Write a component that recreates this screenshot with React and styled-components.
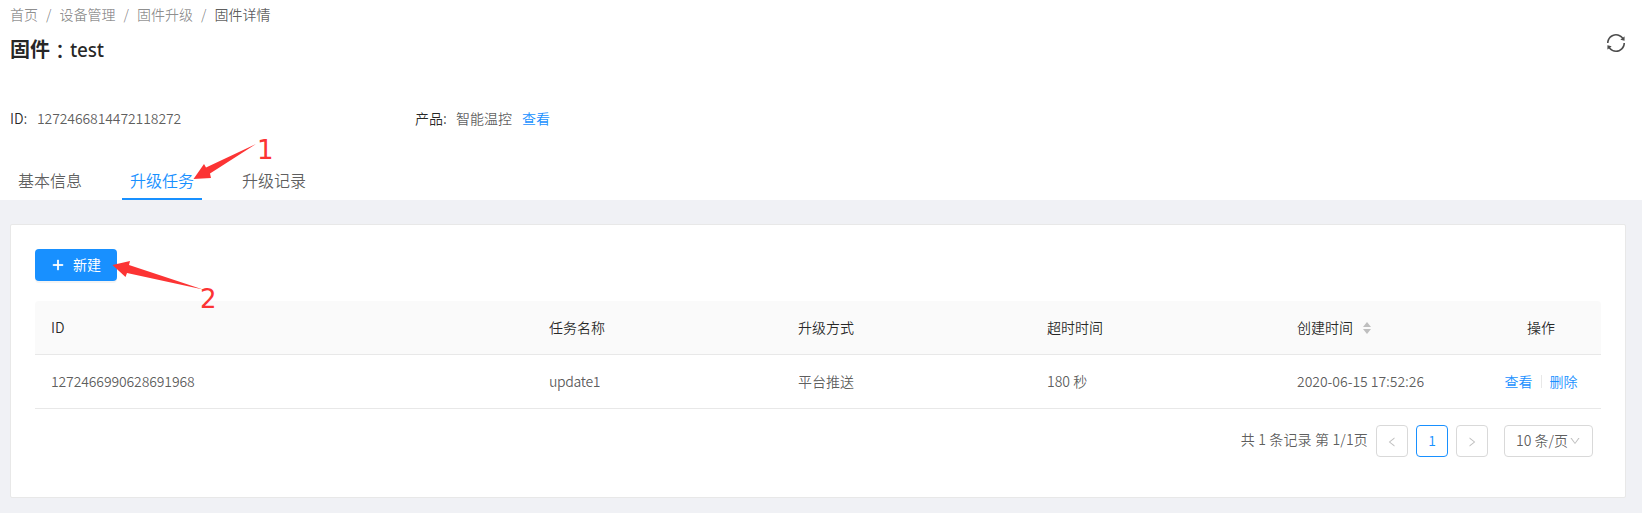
import React from "react";
import styled, { createGlobalStyle } from "styled-components";
import {
  AiOutlineSync,
  AiOutlinePlus,
  AiOutlineLeft,
  AiOutlineRight,
  AiOutlineDown,
} from "react-icons/ai";

const BLUE = "#1890ff";
const RED = "#fc3434";

const GlobalStyle = createGlobalStyle`
  * { box-sizing: border-box; }
  body {
    margin: 0;
    background: #f0f2f5;
    color: rgba(0, 0, 0, 0.65);
    font-family: "Noto Sans CJK SC", sans-serif;
    font-size: 14px;
    font-weight: 350;
    line-height: 22px;
  }
`;

const Page = styled.div`
  position: relative;
  width: 1642px;
  height: 513px;
  overflow: hidden;
  background: #f0f1f5;
`;

const Header = styled.header`
  height: 200px;
  padding: 3px 16px 0 10px;
  background: #fff;
  display: flex;
  flex-direction: column;
`;

const Breadcrumb = styled.nav`
  display: flex;
  height: 22px;
  color: rgba(0, 0, 0, 0.45);
`;

const Crumb = styled.span`
  color: ${(p) => (p.$current ? "rgba(0, 0, 0, 0.65)" : "inherit")};
`;

const Slash = styled.span`
  width: 21.5px;
  text-align: center;
`;

const TitleRow = styled.div`
  display: flex;
  align-items: center;
  justify-content: space-between;
  height: 32px;
  margin-top: 9px;
`;

const Title = styled.h1`
  display: flex;
  margin: 0;
  font-size: 20px;
  font-weight: 600;
  line-height: 32px;
  color: rgba(0, 0, 0, 0.85);
`;

const Colon = styled.span`
  width: 20px;
  padding-top: 2px;
  text-align: center;
  font-family: "Noto Sans CJK TC", sans-serif;
  font-weight: 500;
`;

const TitleName = styled.span`
  padding-top: 1px;
  font-family: "Noto Sans", sans-serif;
  font-size: 19px;
  font-weight: 500;
  letter-spacing: -0.2px;
`;

const RefreshIcon = styled(AiOutlineSync)`
  width: 22px;
  height: 22px;
  margin-top: -14px;
  margin-right: -1px;
  color: rgba(0, 0, 0, 0.7);
`;

const Descriptions = styled.div`
  display: grid;
  grid-template-columns: 405px 1fr;
  margin-top: 41px;
  height: 22px;
`;

const Field = styled.div`
  display: flex;
`;

const Label = styled.span`
  width: ${(p) => p.$width}px;
  color: rgba(0, 0, 0, 0.85);
`;

const Digits = styled.span`
  letter-spacing: ${(p) => p.$spacing ?? 0}px;
`;

const Link = styled.a`
  color: ${BLUE};
  margin-left: ${(p) => p.$gap || 0}px;
`;

const Tabs = styled.div`
  display: flex;
  gap: 32px;
  margin-top: auto;
`;

const Tab = styled.div`
  height: 38px;
  padding: 6px 8px 0;
  font-size: 16px;
  line-height: 24px;
  color: ${(p) => (p.$active ? BLUE : "inherit")};
  border-bottom: 2px solid ${(p) => (p.$active ? BLUE : "transparent")};
`;

const Card = styled.main`
  width: 1616px;
  height: 274px;
  margin: 24px 0 0 10px;
  padding: 24px;
  background: #fff;
  border: 1px solid #e8e8e8;
  border-radius: 2px;
`;

const CreateButton = styled.button`
  display: flex;
  align-items: center;
  gap: 8px;
  width: 82px;
  height: 32px;
  padding: 0 0 2px 16px;
  border: 0;
  border-radius: 4px;
  background: ${BLUE};
  box-shadow: 0 2px 0 rgba(0, 0, 0, 0.045);
  color: #fff;
  font: inherit;
  font-weight: 400;
  svg {
    width: 14px;
    height: 14px;
    margin-top: 2px;
    stroke: currentColor;
    stroke-width: 60;
  }
`;

const Table = styled.div`
  margin-top: 20px;
`;

const Row = styled.div`
  display: grid;
  grid-template-columns: 498px 249px 249px 250px 200px 120px;
  align-items: center;
  height: 54px;
  padding-bottom: 2px;
  border-bottom: 1px solid #e8e8e8;
  border-radius: ${(p) => (p.$head ? "4px 4px 0 0" : 0)};
  background: ${(p) => (p.$head ? "#fafafa" : "#fff")};
  color: ${(p) => (p.$head ? "rgba(0, 0, 0, 0.85)" : "inherit")};
`;

const Cell = styled.div`
  display: flex;
  align-items: center;
  padding-left: ${(p) => (p.$center ? 0 : 16)}px;
  justify-content: ${(p) => (p.$center ? "center" : "flex-start")};
`;

const SortIcon = styled.svg`
  width: 8px;
  height: 12px;
  margin-left: 10px;
  margin-top: 2px;
  fill: #bfbfbf;
`;

const Divider = styled.span`
  width: 1px;
  height: 13px;
  margin: 2px 8px 0 8px;
  background: #e8e8e8;
`;

const Pagination = styled.div`
  display: flex;
  justify-content: flex-end;
  margin: 16px 8px 0 0;
`;

const Total = styled.span`
  margin-right: 8px;
  line-height: 28px;
  letter-spacing: 0.16px;
`;

const PageButton = styled.button`
  display: flex;
  align-items: center;
  justify-content: center;
  width: 32px;
  height: 32px;
  margin-right: 8px;
  padding: 0 0 2px;
  font: inherit;
  color: ${(p) => (p.$active ? BLUE : "rgba(0, 0, 0, 0.25)")};
  background: #fff;
  border: 1px solid ${(p) => (p.$active ? BLUE : "#d9d9d9")};
  border-radius: 4px;
  svg {
    width: 12px;
    height: 12px;
    margin-top: 4px;
  }
`;

const SizeSelect = styled.div`
  display: flex;
  align-items: center;
  width: 89px;
  height: 32px;
  margin-left: 8px;
  padding: 0 0 2px 11px;
  border: 1px solid #d9d9d9;
  border-radius: 4px;
  white-space: nowrap;
  svg {
    width: 12px;
    height: 12px;
    margin-left: 1px;
    margin-top: 1px;
    color: rgba(0, 0, 0, 0.25);
  }
`;

const Arrows = styled.svg`
  position: absolute;
  left: 0;
  top: 0;
  width: 300px;
  height: 320px;
  fill: ${RED};
`;

const StepNumber = styled.span`
  position: absolute;
  left: ${(p) => p.$x}px;
  top: ${(p) => p.$y}px;
  color: ${RED};
  font: 400 26px/30px "DejaVu Sans", sans-serif;
`;

export default function App() {
  return (
    <Page>
      <GlobalStyle />
      <Header>
        <Breadcrumb>
          <Crumb>首页</Crumb>
          <Slash>/</Slash>
          <Crumb>设备管理</Crumb>
          <Slash>/</Slash>
          <Crumb>固件升级</Crumb>
          <Slash>/</Slash>
          <Crumb $current>固件详情</Crumb>
        </Breadcrumb>
        <TitleRow>
          <Title>
            固件<Colon lang="zh-TW">：</Colon>
            <TitleName>test</TitleName>
          </Title>
          <RefreshIcon />
        </TitleRow>
        <Descriptions>
          <Field>
            <Label $width={27}>ID:</Label>
            <Digits $spacing={-0.1}>1272466814472118272</Digits>
          </Field>
          <Field>
            <Label $width={41}>产品:</Label>
            智能温控
            <Link $gap={10}>查看</Link>
          </Field>
        </Descriptions>
        <Tabs>
          <Tab>基本信息</Tab>
          <Tab $active>升级任务</Tab>
          <Tab>升级记录</Tab>
        </Tabs>
      </Header>
      <Card>
        <CreateButton>
          <AiOutlinePlus />
          新建
        </CreateButton>
        <Table>
          <Row $head>
            <Cell>ID</Cell>
            <Cell>任务名称</Cell>
            <Cell>升级方式</Cell>
            <Cell>超时时间</Cell>
            <Cell>
              创建时间
              <SortIcon viewBox="0 0 8 12">
                <path d="M4 0L8 5H0zM4 12L8 7H0z" />
              </SortIcon>
            </Cell>
            <Cell $center>操作</Cell>
          </Row>
          <Row>
            <Cell>
              <Digits $spacing={-0.13}>1272466990628691968</Digits>
            </Cell>
            <Cell>
              <Digits $spacing={-0.35}>update1</Digits>
            </Cell>
            <Cell>平台推送</Cell>
            <Cell>180 秒</Cell>
            <Cell>
              <Digits $spacing={-0.04}>2020-06-15 17:52:26</Digits>
            </Cell>
            <Cell $center>
              <Link>查看</Link>
              <Divider />
              <Link>删除</Link>
            </Cell>
          </Row>
        </Table>
        <Pagination>
          <Total>共 1 条记录 第 1/1页</Total>
          <PageButton>
            <AiOutlineLeft />
          </PageButton>
          <PageButton $active>1</PageButton>
          <PageButton>
            <AiOutlineRight />
          </PageButton>
          <SizeSelect>
            10 条/页
            <AiOutlineDown />
          </SizeSelect>
        </Pagination>
      </Card>
      <Arrows viewBox="0 0 300 320">
        <path d="M193.500 179L204 164L206 167.500L256 144L210 173.500L211 178Z" />
        <path d="M112.500 265L130 261L129 265L203 289.500L127 273L125.500 277Z" />
      </Arrows>
      <StepNumber $x={257} $y={135}>1</StepNumber>
      <StepNumber $x={200} $y={284}>2</StepNumber>
    </Page>
  );
}
